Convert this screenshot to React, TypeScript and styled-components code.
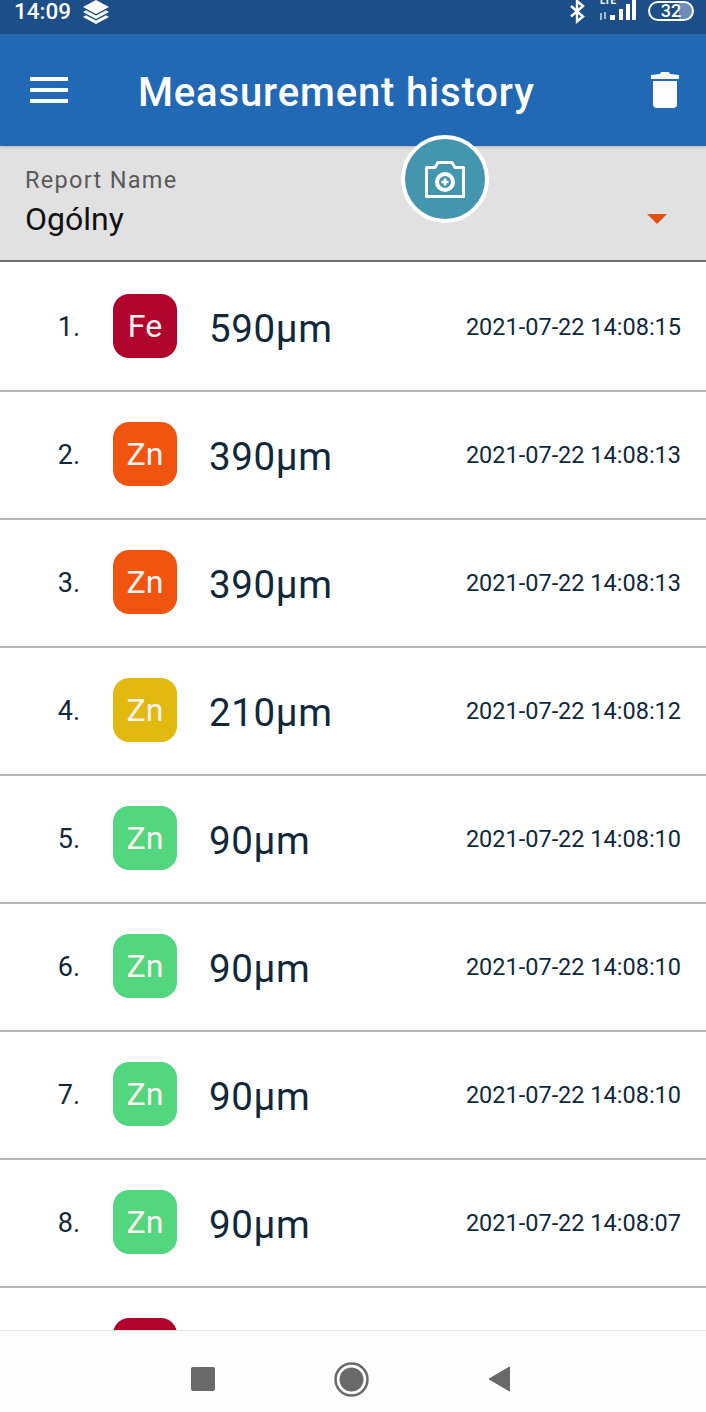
import styled, { createGlobalStyle } from "styled-components";

const GlobalStyle = createGlobalStyle`
  html, body {
    margin: 0;
    padding: 0;
    background: #fff;
    font-family: Roboto, "Liberation Sans", sans-serif;
  }
  * { box-sizing: border-box; }
`;

const Screen = styled.div`
  position: relative;
  width: 706px;
  height: 1412px;
  display: flex;
  flex-direction: column;
  overflow: hidden;
  background: #fff;
`;

const StatusBar = styled.div`
  height: 34px;
  flex: none;
  background: #1c4e87;
  display: flex;
  align-items: flex-start;
  justify-content: space-between;
  padding: 0 12px 0 14px;
  color: #fff;
  overflow: hidden;
`;

const StatusGroup = styled.div`
  display: flex;
  align-items: flex-start;
`;

const Clock = styled.span`
  font-size: 22.5px;
  font-weight: 500;
  line-height: 23px;
  margin-right: 12px;
`;

const SignalSlot = styled.div`
  margin-left: 13px;
`;

const Battery = styled.div`
  width: 46px;
  height: 20px;
  margin: 1px 0 0 10px;
  border: 2px solid #fff;
  border-radius: 10px;
  font-size: 18px;
  font-weight: 500;
  line-height: 16px;
  text-align: center;
  background: linear-gradient(90deg, transparent 68%, #6b8db8 68%);
`;

const AppBar = styled.header`
  height: 112px;
  flex: none;
  background: #2169b5;
  display: flex;
  align-items: center;
  padding: 0 27px 0 30px;
  color: #fff;
  box-shadow: 0 1px 3px rgba(0, 0, 0, 0.2);
  position: relative;
  z-index: 1;
`;

const Title = styled.h1`
  flex: 1;
  margin: 0 0 0 70px;
  font-size: 40px;
  font-weight: 500;
  letter-spacing: 0.85px;
  line-height: 118px;
  height: 112px;
`;

const Filter = styled.div`
  height: 116px;
  flex: none;
  background: #e1e1e1;
  border-bottom: 2px solid #6f6f6f;
  padding: 19px 39px 0 25px;
  display: flex;
  justify-content: space-between;
`;

const FilterLabel = styled.div`
  font-size: 23.5px;
  letter-spacing: 1.3px;
  line-height: 30px;
  color: #5a5a5a;
`;

const FilterValue = styled.div`
  font-size: 32px;
  line-height: 48px;
  color: #111;
`;

const Caret = styled.div`
  width: 0;
  height: 0;
  margin-top: 49px;
  border-left: 10px solid transparent;
  border-right: 10px solid transparent;
  border-top: 10px solid #e0500f;
`;

const CameraFab = styled.button`
  position: absolute;
  left: 401px;
  top: 135px;
  width: 88px;
  height: 88px;
  padding: 0;
  border: 4px solid #fff;
  border-radius: 50%;
  background: #4496ae;
  display: flex;
  align-items: center;
  justify-content: center;
  z-index: 2;
`;

const List = styled.main`
  flex: 1;
  min-height: 0;
  overflow: hidden;
  padding-top: 2px;
`;

const Row = styled.div`
  height: 128px;
  border-bottom: 2px solid #b6b6b6;
  display: flex;
  align-items: center;
  padding: 0 25px 2px 0;
  color: #10293a;
`;

const Index = styled.div`
  width: 80px;
  flex: none;
  padding-top: 2px;
  text-align: right;
  font-size: 27px;
`;

const Chip = styled.div<{ $color: string }>`
  width: 64px;
  height: 64px;
  flex: none;
  margin-left: 33px;
  border-radius: 16px;
  background: ${(p) => p.$color};
  color: #fdf3f3;
  font-size: 32px;
  display: flex;
  align-items: center;
  justify-content: center;
`;

const Value = styled.div`
  flex: 1;
  margin-left: 32px;
  padding-top: 4px;
  font-size: 38.5px;
  letter-spacing: 0.6px;
`;

const Stamp = styled.div`
  padding-top: 2px;
  font-size: 23.5px;
`;

const NavBar = styled.nav`
  height: 82px;
  flex: none;
  background: #fefefe;
  border-top: 1px solid #e3e3e3;
  display: flex;
  align-items: center;
  justify-content: center;
  gap: 119px;
  padding: 15px 5px 0 0;
`;

const colors = {
  red: "#b0042c",
  orange: "#f0540e",
  yellow: "#e2b90f",
  green: "#52d67e",
};

const rows = [
  { el: "Fe", color: colors.red, value: "590µm", time: "2021-07-22 14:08:15" },
  { el: "Zn", color: colors.orange, value: "390µm", time: "2021-07-22 14:08:13" },
  { el: "Zn", color: colors.orange, value: "390µm", time: "2021-07-22 14:08:13" },
  { el: "Zn", color: colors.yellow, value: "210µm", time: "2021-07-22 14:08:12" },
  { el: "Zn", color: colors.green, value: "90µm", time: "2021-07-22 14:08:10" },
  { el: "Zn", color: colors.green, value: "90µm", time: "2021-07-22 14:08:10" },
  { el: "Zn", color: colors.green, value: "90µm", time: "2021-07-22 14:08:10" },
  { el: "Zn", color: colors.green, value: "90µm", time: "2021-07-22 14:08:07" },
];

const LayersIcon = () => (
  <svg width="26" height="24" viewBox="0 0 26 24" fill="#fff">
    <path d="M13 0 26 7 13 14 0 7Z" />
    <path d="M3 10.200 0 12 13 19 26 12 23 10.200 13 15.600Z" />
    <path d="M3 15.200 0 17 13 24 26 17 23 15.200 13 20.600Z" />
  </svg>
);

const BluetoothIcon = () => (
  <svg width="16" height="24" viewBox="0 0 16 24" fill="none" stroke="#fff" strokeWidth="2.400">
    <path d="M2 6 14 16.500 8 21.500V1L14 6 2 16.500" />
  </svg>
);

const SignalIcon = () => (
  <svg width="40" height="22" viewBox="0 0 40 22" fill="#fff">
    <text x="2" y="4" fontSize="10" fontWeight="700" fontFamily="Roboto, sans-serif">
      LTE
    </text>
    <path d="M2 13h2v7H2zM6 12h2v7H6z" opacity="0.6" />
    <rect x="12" y="15" width="5" height="5" />
    <rect x="21" y="9" width="4" height="11" />
    <rect x="28" y="4" width="4" height="16" />
    <rect x="34" y="0" width="4" height="20" />
  </svg>
);

const MenuIcon = () => (
  <svg width="38" height="26" viewBox="0 0 38 26" fill="#fff">
    <rect width="38" height="4" y="0" />
    <rect width="38" height="4" y="11" />
    <rect width="38" height="4" y="22" />
  </svg>
);

const TrashIcon = () => (
  <svg width="28" height="36" viewBox="0 0 28 36" fill="#fff">
    <path d="M9 2C9 1 10 0 11 0h6c1 0 2 1 2 2L28 3v4H0V3Z" />
    <path d="M2 9h24v23.500c0 2-1.500 3.500-3.500 3.500h-17C3.500 36 2 34.500 2 32.500Z" />
  </svg>
);

const CameraIcon = () => (
  <svg width="40" height="37" viewBox="0 0 40 37" fill="none" stroke="#fff">
    <path d="M1.500 6.500H10L13 1.500h14l3 5h8.500v29H1.500Z" strokeWidth="3" strokeLinejoin="round" />
    <circle cx="20" cy="21" r="8" strokeWidth="4" />
    <path d="M20 17.500v7M16.500 21h7" strokeWidth="2.500" />
  </svg>
);

const SquareIcon = () => (
  <svg width="24" height="24" viewBox="0 0 24 24" fill="#696969">
    <rect width="24" height="24" rx="2" />
  </svg>
);

const CircleIcon = () => (
  <svg width="35" height="35" viewBox="0 0 35 35">
    <circle cx="17.500" cy="17.500" r="16" fill="none" stroke="#696969" strokeWidth="2.500" />
    <circle cx="17.500" cy="17.500" r="12" fill="#696969" />
  </svg>
);

const BackIcon = () => (
  <svg width="22" height="26" viewBox="0 0 22 26" fill="#696969">
    <path d="M21.500 1V25L1 13Z" stroke="#696969" strokeLinejoin="round" />
  </svg>
);

export default function App() {
  return (
    <Screen>
      <GlobalStyle />
      <StatusBar>
        <StatusGroup>
          <Clock>14:09</Clock>
          <LayersIcon />
        </StatusGroup>
        <StatusGroup>
          <BluetoothIcon />
          <SignalSlot>
            <SignalIcon />
          </SignalSlot>
          <Battery>32</Battery>
        </StatusGroup>
      </StatusBar>
      <AppBar>
        <MenuIcon />
        <Title>Measurement history</Title>
        <TrashIcon />
      </AppBar>
      <Filter>
        <div>
          <FilterLabel>Report Name</FilterLabel>
          <FilterValue>Ogólny</FilterValue>
        </div>
        <Caret />
      </Filter>
      <CameraFab>
        <CameraIcon />
      </CameraFab>
      <List>
        {rows.map((row, index) => (
          <Row key={index}>
            <Index>{index + 1}.</Index>
            <Chip $color={row.color}>{row.el}</Chip>
            <Value>{row.value}</Value>
            <Stamp>{row.time}</Stamp>
          </Row>
        ))}
        <Row>
          <Index />
          <Chip $color={colors.red} />
        </Row>
      </List>
      <NavBar>
        <SquareIcon />
        <CircleIcon />
        <BackIcon />
      </NavBar>
    </Screen>
  );
}
